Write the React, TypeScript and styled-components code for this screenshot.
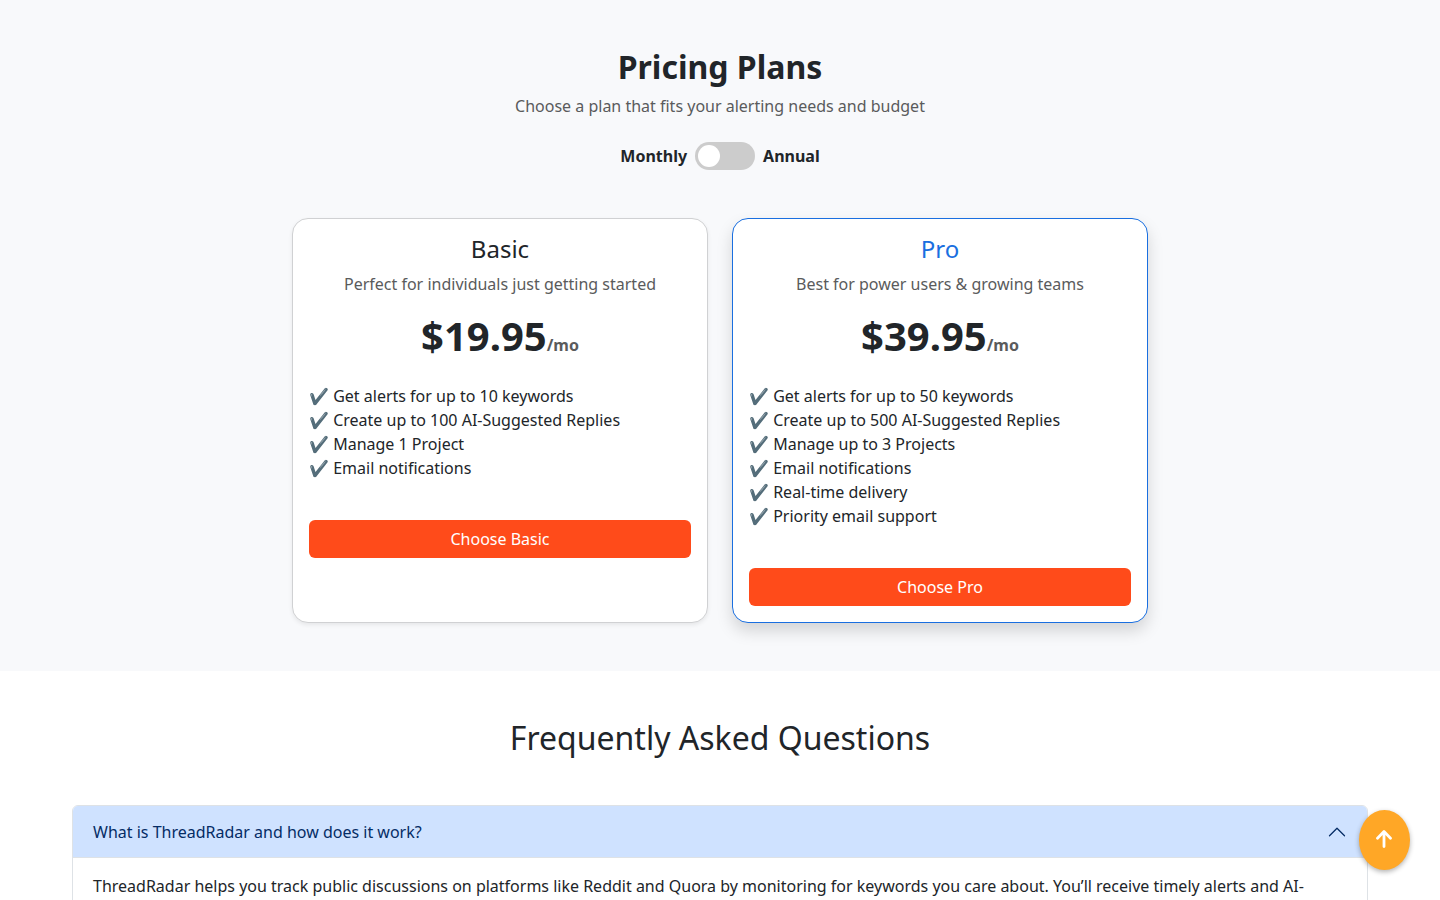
import { useState } from "react";
import styled, { createGlobalStyle } from "styled-components";

const GlobalStyle = createGlobalStyle`
  *, *::before, *::after { box-sizing: border-box; }
  body {
    margin: 0;
    background: #fff;
    color: #212529;
    font-family: "Noto Sans", "Liberation Sans", sans-serif;
    font-size: 16px;
    line-height: 24px;
  }
  h2, h3, p, ul { margin: 0; padding: 0; }
  button { font: inherit; border: 0; cursor: pointer; }
`;

const PricingSection = styled.section`
  display: flex;
  flex-direction: column;
  align-items: center;
  padding: 48px 12px;
  background: #f8f9fb;
`;

const SectionTitle = styled.h2<{ $bold?: boolean }>`
  font-size: 32px;
  line-height: 38px;
  font-weight: ${({ $bold }) => ($bold ? 700 : 400)};
  text-align: center;
`;

const Muted = styled.p`
  margin-top: 8px;
  color: #5a5b5c;
  text-align: center;
`;

const BillingToggle = styled.label`
  display: flex;
  align-items: center;
  gap: 8px;
  margin: 24px 0 48px;
  font-weight: 700;
  cursor: pointer;
`;

const Switch = styled.input`
  display: flex;
  appearance: none;
  width: 60px;
  height: 28px;
  margin: 0;
  padding: 3px;
  border-radius: 14px;
  background: #ccc;
  cursor: pointer;

  &::before {
    content: "";
    width: 22px;
    height: 22px;
    border-radius: 50%;
    background: #fff;
  }
  &:checked {
    justify-content: flex-end;
    background: #1a6fe0;
  }
`;

const PlanGrid = styled.div`
  display: grid;
  grid-template-columns: repeat(auto-fit, minmax(300px, 1fr));
  gap: 24px;
  width: 100%;
  max-width: 856px;
`;

const PlanCard = styled.article<{ $featured?: boolean }>`
  padding: 16px;
  border: 1px solid ${({ $featured }) => ($featured ? "#1a6fe0" : "#d0d1d3")};
  border-radius: 16px;
  background: #fff;
  box-shadow: ${({ $featured }) =>
    $featured ? "0 8px 16px rgba(0, 0, 0, 0.15)" : "0 2px 4px rgba(0, 0, 0, 0.075)"};
`;

const PlanName = styled.h3<{ $featured?: boolean }>`
  margin-bottom: 9px;
  font-size: 24px;
  line-height: 28px;
  font-weight: 400;
  text-align: center;
  color: ${({ $featured }) => ($featured ? "#1a6fe0" : "inherit")};
`;

const Price = styled.p`
  margin: 16px 0 24px;
  font-size: 40px;
  line-height: 48px;
  font-weight: 700;
  text-align: center;
`;

const Period = styled.span`
  font-size: 16px;
  line-height: 24px;
  color: #5a5b5c;
`;

const FeatureList = styled.ul`
  margin-bottom: 40px;
  list-style: none;
`;

const ChooseButton = styled.button`
  width: 100%;
  padding: 7px 12px;
  border-radius: 6px;
  background: #ff4b1a;
  color: #fff;
`;

const FaqSection = styled.section`
  max-width: 1320px;
  margin: 0 auto;
  padding: 48px 12px;
`;

const Accordion = styled.div`
  margin-top: 48px;
  border: 1px solid #dee2e6;
  border-radius: 6px;
  overflow: hidden;
`;

const AccordionButton = styled.button`
  display: flex;
  align-items: center;
  justify-content: space-between;
  width: 100%;
  padding: 16px 20px;
  background: #cfe2ff;
  color: #052c65;
  line-height: 20px;
  text-align: left;
  box-shadow: inset 0 -1px 0 #dee2e6;
`;

const Chevron = styled.svg<{ $open: boolean }>`
  width: 20px;
  height: 20px;
  transform: ${({ $open }) => ($open ? "none" : "rotate(180deg)")};
`;

const AccordionBody = styled.div`
  padding: 16px 20px;
`;

const ScrollTop = styled.button`
  position: fixed;
  right: 30px;
  bottom: 30px;
  display: flex;
  align-items: center;
  justify-content: center;
  width: 51px;
  height: 60px;
  padding: 0 1px 2px 0;
  border-radius: 50%;
  background: #ffa726;
  color: #fff;
  box-shadow: 0 2px 5px rgba(0, 0, 0, 0.3);
`;

const plans = [
  {
    name: "Basic",
    summary: "Perfect for individuals just getting started",
    price: "$19.95",
    featured: false,
    features: [
      "Get alerts for up to 10 keywords",
      "Create up to 100 AI-Suggested Replies",
      "Manage 1 Project",
      "Email notifications",
    ],
  },
  {
    name: "Pro",
    summary: "Best for power users & growing teams",
    price: "$39.95",
    featured: true,
    features: [
      "Get alerts for up to 50 keywords",
      "Create up to 500 AI-Suggested Replies",
      "Manage up to 3 Projects",
      "Email notifications",
      "Real-time delivery",
      "Priority email support",
    ],
  },
];

export default function App() {
  const [annual, setAnnual] = useState(false);
  const [open, setOpen] = useState(true);

  return (
    <>
      <GlobalStyle />
      <main>
        <PricingSection>
          <SectionTitle $bold>Pricing Plans</SectionTitle>
          <Muted>Choose a plan that fits your alerting needs and budget</Muted>
          <BillingToggle>
            <span>Monthly</span>
            <Switch
              type="checkbox"
              role="switch"
              checked={annual}
              onChange={(e) => setAnnual(e.target.checked)}
            />
            <span>Annual</span>
          </BillingToggle>
          <PlanGrid>
            {plans.map((plan) => (
              <PlanCard key={plan.name} $featured={plan.featured}>
                <PlanName $featured={plan.featured}>{plan.name}</PlanName>
                <Muted>{plan.summary}</Muted>
                <Price>
                  {plan.price}
                  <Period>/mo</Period>
                </Price>
                <FeatureList>
                  {plan.features.map((feature) => (
                    <li key={feature}>✔️ {feature}</li>
                  ))}
                </FeatureList>
                <ChooseButton type="button">Choose {plan.name}</ChooseButton>
              </PlanCard>
            ))}
          </PlanGrid>
        </PricingSection>

        <FaqSection>
          <SectionTitle>Frequently Asked Questions</SectionTitle>
          <Accordion>
            <AccordionButton
              type="button"
              aria-expanded={open}
              aria-controls="faq-about"
              onClick={() => setOpen(!open)}
            >
              What is ThreadRadar and how does it work?
              <Chevron $open={open} viewBox="0 0 16 16" fill="none" aria-hidden="true">
                <path d="m2 11 6-6 6 6" stroke="#052c65" strokeLinecap="round" strokeLinejoin="round" />
              </Chevron>
            </AccordionButton>
            {open && (
              <AccordionBody id="faq-about">
                ThreadRadar helps you track public discussions on platforms like Reddit and Quora by
                monitoring for keywords you care about. You’ll receive timely alerts and AI-suggested
                replies.
              </AccordionBody>
            )}
          </Accordion>
        </FaqSection>
      </main>
      <ScrollTop
        type="button"
        aria-label="Back to top"
        onClick={() => window.scrollTo({ top: 0, behavior: "smooth" })}
      >
        <svg width="16" height="18" viewBox="0 0 16 18" fill="none" aria-hidden="true">
          <path
            d="M8 16.6V1.6M1.5 8.2l6.5-6.6 6.5 6.6"
            stroke="currentColor"
            strokeWidth="2.8"
            strokeLinecap="round"
            strokeLinejoin="round"
          />
        </svg>
      </ScrollTop>
    </>
  );
}
